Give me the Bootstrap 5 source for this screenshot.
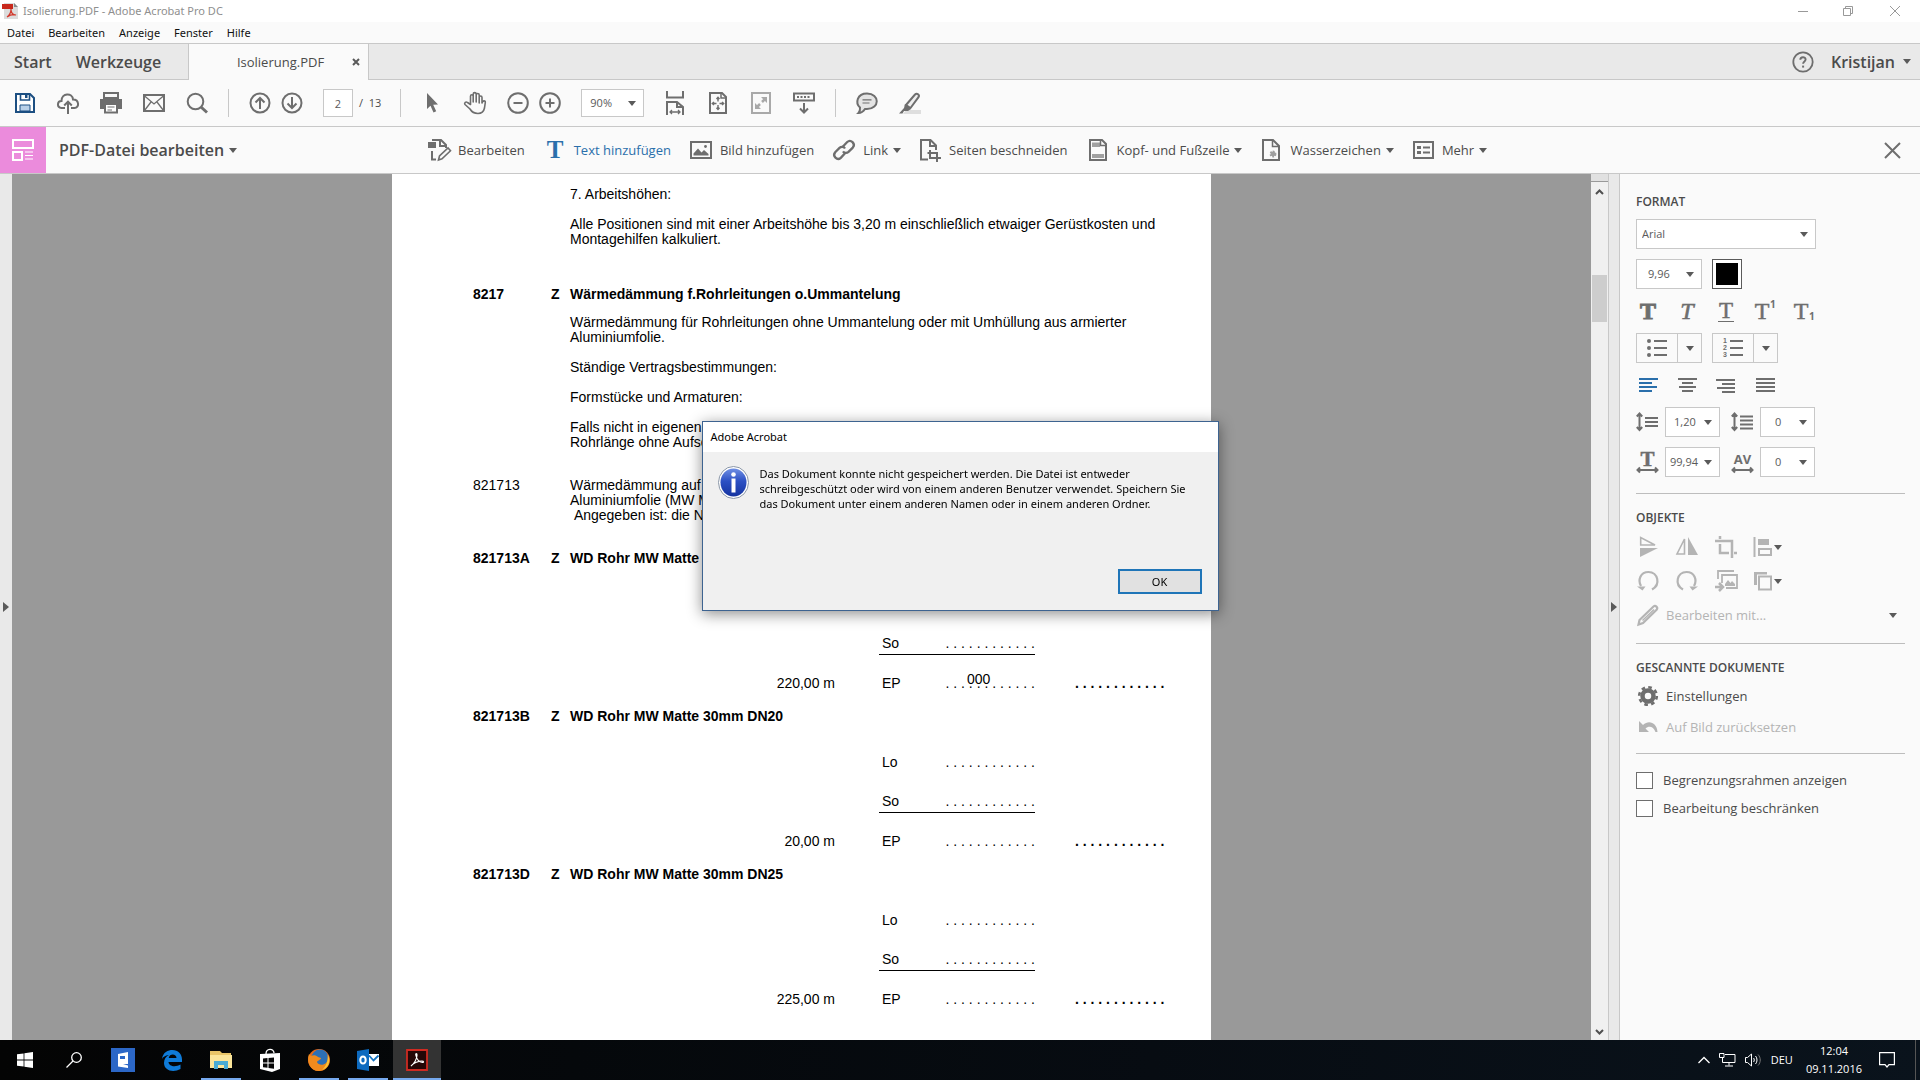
<!DOCTYPE html>
<html lang="de">
<head>
<meta charset="utf-8">
<meta name="viewport" content="width=device-width, initial-scale=1">
<title>Isolierung.PDF - Adobe Acrobat Pro DC</title>
<link href="https://cdn.jsdelivr.net/npm/bootstrap@5.3.0/dist/css/bootstrap.min.css" rel="stylesheet">
<style>
:root{--ink:#4b4b4b;--icon:#6e6e6e;--off:#b4b4b4;--line:#c8c8c8;--bar:#fafafa;--strip:#e9e9e9;--blue:#2a6fab}
body{font-family:"Open Sans","Noto Sans",sans-serif;font-size:13px;line-height:20px;color:var(--ink);background:var(--bar)}
button{background:none;border:0;padding:0;color:inherit;font:inherit;line-height:inherit}
a{color:inherit;text-decoration:none}
svg{display:block;flex:none;overflow:visible}
.app-window{height:100vh;overflow:hidden}
.title-bar{height:22px;background:#fff;color:#8f8f8f;font-family:"Noto Sans",sans-serif;font-size:11px;gap:5px;padding-left:2px;padding-right:11px}
.menu-bar{height:21px;color:#111;font-family:"Noto Sans",sans-serif;font-size:11px;gap:14px;padding-left:7px}
.tab-strip{height:37px;background:var(--strip);border-top:1px solid var(--line);border-bottom:1px solid var(--line)}
.tab-strip .big{font-size:16px;font-weight:600}
.tab-links{width:188px;gap:24px;padding-left:14px}
.doc-tab{width:181px;height:36px;background:var(--bar);border:1px solid var(--line);border-width:0 1px;margin-bottom:-1px;padding:0 8px 0 20px}
.user-area{gap:16px;padding-right:9px}
.tool-bar{height:47px;border-bottom:1px solid var(--line);gap:19px;padding-left:13px;font-size:11px}
.edit-bar{height:47px;border-bottom:1px solid var(--line)}
.ib{width:24px;height:24px;display:flex;align-items:center;justify-content:center;color:var(--icon);flex:none}
.sep{width:1px;height:28px;background:var(--line)}
.box{border:1px solid var(--line);border-radius:0;background-color:#fff;color:#5a5a5a;font-size:11px;line-height:20px;padding:0}
.page-no{width:30px;height:28px;text-align:center;margin-right:6px}
select.box{appearance:none;background-repeat:no-repeat;background-position:right 7px center;background-size:8px 5px;
 background-image:url("data:image/svg+xml,%3Csvg xmlns='http://www.w3.org/2000/svg' viewBox='0 0 8 5'%3E%3Cpath fill='%235a5a5a' d='M0 0h8L4 5z'/%3E%3C/svg%3E")}
.zoom-sel{width:63px;height:28px;padding-left:8px}
.caret{width:0;height:0;border:4px solid transparent;border-top:5px solid #5a5a5a;border-bottom:0;flex:none}
.mode-tile{width:46px;height:46px;background:#eb8bdc}
.mode-name{font-size:16px;font-weight:600;gap:5px;margin-left:13px;width:179px}
.edit-tools{margin-left:189px;gap:17px}
.edit-tools button{display:flex;align-items:center;gap:7px}
.edit-tools .plain{margin-right:1px}
.edit-tools .caret{margin-left:-2px}
.tone-blue{color:var(--blue)}
.tone-blue .ib{color:var(--blue)}
.work{min-height:0}
.side-strip{width:12px;background:var(--strip)}
.side-strip.r{border:1px solid var(--line);border-width:0 1px}
.canvas-area{background:#999;min-width:0;overflow:hidden}
.sheet{width:819px;background:#fff;color:#000;font-family:"Liberation Sans",Arial,sans-serif;font-size:14px;line-height:15px;padding:13px 0 0 81px}
.entry{display:grid;grid-template-columns:78px 19px 620px}
.entry p{margin:0 0 15px;grid-column:3}
.entry.chapter{margin:25px 0 13px}
.entry.article{margin:13px 0 28px}
.entry.article p{margin:0}
.head-row{margin-bottom:31px}
.price{display:flex;align-items:flex-start;margin-bottom:18px}
.price.wage{margin-bottom:24px}
.price.other{margin-bottom:21px}
.price .qty{width:362px;margin-right:44px;text-align:right}
.price .cell{width:156px;display:flex;justify-content:space-between;padding-left:3px;position:relative}
.price.other .cell{border-bottom:1px solid #000;height:19px}
.price .total{margin-left:40px;font-weight:700}
.note{position:absolute;left:88px;top:-4px}
.scroller{width:17px;background:#f0f0f0}
.scroller .splitter{width:100%;height:8px;background:#e1e1e1;border-bottom:1px solid #999}
.scroller .thumb{width:15px;height:47px;background:#cdcdcd;margin-top:77px}
.panel{width:300px;padding:20px 15px 0 16px}
.panel h2{font-size:12px;line-height:16px;font-weight:600;margin:0 0 9px}
.panel hr{margin:16px 0;border-top:1px solid #bdbdbd;opacity:1}
.stack{gap:10px}
.icons{gap:15px}
.panel .box{height:30px}
.box.w-font{width:180px;padding-left:5px}
.box.w-size{width:66px;padding-left:11px}
.box.w-num{width:55px;padding-left:8px;margin:0 11px 0 5px}
.box.w-num.wide{padding-left:4px}
.box.w-num.zero{padding-left:14px;margin-right:0}
.swatch{width:30px;height:30px;padding:3px;border:1px solid #5a5a5a;background:#fff}
.swatch span{display:block;width:22px;height:22px;background:#000}
.split{width:66px;border:1px solid var(--line);height:30px;background:var(--bar)}
.split button:first-child{width:41px;border-right:1px solid var(--line);height:100%}
.off{color:var(--off)}
.row-btn{display:flex;align-items:center;gap:6px;height:24px}
.scan-list{gap:7px;margin-top:-1px;margin-bottom:-2px}
.tick{width:17px;height:17px;border:1px solid #6e6e6e}
.tick.form-check-input[type=checkbox]{border-radius:0;margin:0}
.taskbar{height:40px;padding-left:1px;background:linear-gradient(90deg,#040404,#05080b 30%,#070c12 60%,#0a131c);color:#fff;font-size:11px;line-height:18px}
.task-list{gap:1px}
.task{width:48px;height:40px;display:flex;align-items:center;justify-content:center}
.task.open{background:linear-gradient(#76a9ee,#76a9ee) center bottom/40px 2px no-repeat}
.task.front{background:#333;box-shadow:inset 0 -2px #76a9ee}
.tray{gap:9px}
.tray time{margin:0 8px 0 4px}
.desk-edge{width:1px;height:40px;background:#555;margin:0 4px 0 11px}
.dialog-layer{position:fixed;inset:0 0 48px 0;pointer-events:none;display:flex;align-items:center;justify-content:center}
.msg{width:517px;height:190px;background:#f0f0f0;border:1px solid #3d6390;color:#000;box-shadow:0 3px 14px rgba(0,0,0,.45);font-family:"Noto Sans",sans-serif;font-size:11px;line-height:15px;pointer-events:auto}
.msg header{height:30px;background:#fff;padding:7px 8px}
.msg-body{padding:14px 15px 0;gap:11px}
.ok{width:84px;height:25px;background:#e1e1e1;border:2px solid #1f75b8}
</style>
<script src="https://cdn.jsdelivr.net/npm/bootstrap@5.3.0/dist/js/bootstrap.bundle.min.js"></script>
</head>
<body>
<div class="app-window d-flex flex-column">

<header class="title-bar d-flex align-items-center flex-shrink-0">
  <svg width="16" height="16" viewBox="0 0 16 16"><path d="M2 0h10l4 4v12H2z" fill="#dcdcdc"/><path d="M12 0l4 4h-4z" fill="#888"/><path d="M0 1h11v5H0z" fill="#c8281c"/><path d="M5 14c3-2 4-5 4-8 0 4 2 6 5 6-3-1-6 0-9 2z" fill="none" stroke="#d23a2e" stroke-width="1.2"/></svg>
  <span>Isolierung.PDF - Adobe Acrobat Pro DC</span>
  <div class="ms-auto d-flex align-items-center gap-4">
    <button aria-label="Minimieren"><svg width="21" height="20" viewBox="0 0 21 20" stroke="#999"><path d="M0 10.500h10"/></svg></button>
    <button aria-label="Wiederherstellen"><svg width="22" height="20" viewBox="0 0 22 20" fill="none" stroke="#999"><path d="M.5 7.500h7v7h-7zM2.500 7.500v-2h7v7h-2"/></svg></button>
    <button aria-label="Schließen"><svg width="20" height="20" viewBox="0 0 20 20" stroke="#999"><path d="M1 5l10 10M11 5L1 15"/></svg></button>
  </div>
</header>

<nav class="menu-bar d-flex align-items-center flex-shrink-0" aria-label="Menü">
  <a href="#">Datei</a><a href="#">Bearbeiten</a><a href="#">Anzeige</a><a href="#">Fenster</a><a href="#">Hilfe</a>
</nav>

<div class="tab-strip d-flex align-items-center flex-shrink-0">
  <div class="tab-links d-flex big"><button>Start</button><button>Werkzeuge</button></div>
  <div class="doc-tab d-flex align-items-center">
    <span class="flex-grow-1 text-center">Isolierung.PDF</span>
    <button aria-label="Tab schließen"><svg width="8" height="8" viewBox="0 0 8 8" stroke="#5a5a5a" stroke-width="2"><path d="M1 1l6 6M7 1L1 7"/></svg></button>
  </div>
  <div class="user-area ms-auto d-flex align-items-center">
    <button class="ib" aria-label="Hilfe"><svg width="24" height="24" viewBox="0 0 24 24" fill="none" stroke="#6e6e6e"><circle cx="12" cy="12" r="9.700" stroke-width="1.800"/><path d="M9.300 9.800c0-3.400 5.300-3.400 5.300-.3 0 1.900-2.500 2-2.500 4.300" stroke-width="1.900"/><path d="M12.100 15.600v2" stroke-width="2"/></svg></button>
    <button class="big d-flex align-items-center gap-2">Kristijan <span class="caret"></span></button>
  </div>
</div>

<div class="tool-bar d-flex align-items-center flex-shrink-0">
  <button class="ib" aria-label="Speichern"><svg width="24" height="24" viewBox="0 0 24 24"><path d="M3 3h14l4 4v14H3z" fill="#fff" stroke="#1c4f82" stroke-width="2"/><path d="M7.500 3v6h9V3" fill="none" stroke="#1c4f82" stroke-width="1.600"/><path d="M12 3.500h2.500V7H12z" fill="#1c4f82"/><path d="M7 14h10v6H7z" fill="#b9d0e8" stroke="#1c4f82"/></svg></button>
  <button class="ib" aria-label="Hochladen"><svg width="24" height="24" viewBox="0 0 24 24" fill="none" stroke="currentColor" stroke-width="2"><path d="M9 17H5.500C.5 16.500 1 10 5.500 10 5.500 1.500 16.500 1.500 17 8.500c6.500 0 6.500 8.500 1.500 8.500H15"/><path d="M12 23V11M8.200 14.500L12 10.700l3.800 3.800"/></svg></button>
  <button class="ib" aria-label="Drucken"><svg width="24" height="24" viewBox="0 0 24 24"><path d="M5 2h14v5H5z" fill="none" stroke="currentColor" stroke-width="2"/><path d="M1 8h22v10h-4v-5H5v5H1z" fill="currentColor"/><path d="M6 13h12v8.500H6z" fill="#fff" stroke="currentColor" stroke-width="2"/><path d="M8.500 16h7M8.500 19h4.500" stroke="currentColor"/></svg></button>
  <button class="ib" aria-label="E-Mail"><svg width="24" height="24" viewBox="0 0 24 24" fill="none" stroke="currentColor"><path d="M2 4h20v16H2z" stroke-width="2"/><path d="M2 4.500l10 8.500 10-8.500M2.500 19.500L9 11M21.500 19.500L15 11" stroke-width="1.300"/></svg></button>
  <button class="ib" aria-label="Suchen"><svg width="24" height="24" viewBox="0 0 24 24" fill="none" stroke="currentColor"><circle cx="10.500" cy="10.500" r="7.800" stroke-width="2"/><path d="M16 16l6 5.500" stroke-width="3"/></svg></button>
  <div class="sep"></div>
  <div class="d-flex gap-2">
    <button class="ib" aria-label="Vorherige Seite"><svg width="24" height="24" viewBox="0 0 24 24" fill="none" stroke="currentColor" stroke-width="2"><circle cx="12" cy="12" r="9.500"/><path d="M12 18V7.500M7.500 11.500L12 7l4.500 4.500"/></svg></button>
    <button class="ib" aria-label="Nächste Seite"><svg width="24" height="24" viewBox="0 0 24 24" fill="none" stroke="currentColor" stroke-width="2"><circle cx="12" cy="12" r="9.500"/><path d="M12 6v10.500M7.500 12.500L12 17l4.500-4.500"/></svg></button>
  </div>
  <label class="d-flex align-items-center"><input class="box page-no" type="text" value="2" aria-label="Seite"><span>/&nbsp; 13</span></label>
  <div class="sep"></div>
  <button class="ib" aria-label="Auswahl"><svg width="24" height="24" viewBox="0 0 24 24"><path d="M7 2l11 11.500-4.800.2 3 6.500-2.700 1.300-3-6.700L7 18z" fill="currentColor"/></svg></button>
  <button class="ib" aria-label="Hand"><svg width="24" height="24" viewBox="0 0 24 24" fill="none" stroke="currentColor" stroke-width="1.600" stroke-linecap="round" stroke-linejoin="round"><path d="M7.500 13.500V5.200c0-2 2.700-2 2.700 0V11 3.200c0-2.100 3-2.100 3 0V11 4c0-2 3-2 3 0v8V6.500c0-2 2.800-2 2.800 0V12c.5-2.500 3.500-3 3.300-.5l-.8 5.500c-.8 3.800-3 5.500-6.500 5.500-4 0-6-1-8-4.500L2 13.500c-1.200-2 1-3.200 2.500-2z"/></svg></button>
  <div class="d-flex gap-2">
    <button class="ib" aria-label="Verkleinern"><svg width="24" height="24" viewBox="0 0 24 24" fill="none" stroke="currentColor" stroke-width="2"><circle cx="12" cy="12" r="9.800"/><path d="M7.500 12h9"/></svg></button>
    <button class="ib" aria-label="Vergrößern"><svg width="24" height="24" viewBox="0 0 24 24" fill="none" stroke="currentColor" stroke-width="2"><circle cx="12" cy="12" r="9.800"/><path d="M7.500 12h9M12 7.500v9"/></svg></button>
  </div>
  <select class="box zoom-sel" aria-label="Zoom"><option>90%</option></select>
  <button class="ib" aria-label="Seitenbreite"><svg width="24" height="26" viewBox="0 0 24 26" fill="none" stroke="currentColor" stroke-width="2"><path d="M4 1v6.500h16V1M4 25V12h10l6 5v8M14 12v5h6"/><path d="M7 22h10M9 20l-2 2 2 2M15 20l2 2-2 2" stroke-width="1.300"/></svg></button>
  <button class="ib" aria-label="Ganze Seite"><svg width="24" height="24" viewBox="0 0 24 24" fill="none" stroke="currentColor"><path d="M4 2h12l4 4v16H4z" stroke-width="2"/><path d="M15 2v5h5" stroke-width="1.500"/><path d="M12 6.500v4M12 14v4M6.500 12.500h4M13.500 12.500h4M10.500 8L12 6.300 13.500 8M10.500 16.800l1.500 1.700 1.500-1.700M8 11l-1.700 1.500L8 14M16 11l1.700 1.500L16 14" stroke-width="1.400"/></svg></button>
  <button class="ib" aria-label="Vollbild"><svg width="24" height="24" viewBox="0 0 24 24" fill="none" stroke="#a9a9a9"><path d="M3 2h18v20H3z" stroke-width="2"/><path d="M12 6h6v6zM6 12v6h6z" fill="#a9a9a9" stroke="none"/><path d="M17 7l-4 4M7 17l4-4" stroke-width="2.500"/></svg></button>
  <button class="ib" aria-label="Bildlauf"><svg width="24" height="24" viewBox="0 0 24 24" fill="none" stroke="currentColor"><path d="M2 2.500h20v7H2z" stroke-width="2"/><path d="M5 6h14" stroke-width="2" stroke-dasharray="2 1.500"/><path d="M12 12v9M8 17.500l4 4 4-4" stroke-width="2"/></svg></button>
  <div class="sep"></div>
  <button class="ib" aria-label="Kommentar"><svg width="24" height="24" viewBox="0 0 24 24" fill="#e4e4e4" stroke="currentColor" stroke-width="2"><path d="M12 2.500c13 0 13 15.500 0 15.500h-2c-2 3-4 4-6.500 4 1.500-1.500 1.800-3 1.500-5.500C0 12 2 2.500 12 2.500z"/><path d="M7.500 8.800h9M7.500 12h7" stroke-width="1.200"/></svg></button>
  <button class="ib" aria-label="Hervorheben"><svg width="24" height="24" viewBox="0 0 24 24"><path d="M8 19h15v4H5z" fill="#dedede"/><path d="M8 14L17 3.500c2-2 5 .5 3.500 2.700L12.500 17z" fill="#eee" stroke="currentColor" stroke-width="2"/><path d="M7 13l6 5-3 2H6l-1.500 2.500H1L6 17z" fill="currentColor"/></svg></button>
</div>

<div class="edit-bar d-flex align-items-center flex-shrink-0">
  <div class="mode-tile d-flex align-items-center justify-content-center"><svg width="24" height="24" viewBox="0 0 24 24" fill="none" stroke="#fff" stroke-width="2"><path d="M2 2h20v8H2zM2 14h9v8H2z"/><path d="M14 14h8M14 17.500h8M14 21h8" stroke-width="1.200"/></svg></div>
  <button class="mode-name d-flex align-items-center">PDF-Datei bearbeiten<span class="caret"></span></button>
  <div class="edit-tools d-flex align-items-center">
    <button class="plain"><span class="ib"><svg width="24" height="24" viewBox="0 0 24 24" fill="none" stroke="currentColor"><path d="M1 4h8v6H1z" fill="currentColor" stroke="none"/><path d="M5 2h9l5 5v3M5 13v8.500h4" stroke-width="2"/><path d="M13 2v6h6" stroke-width="2"/><path d="M11.500 22l1-4 8.500-8 2.500 2.800-8.500 8z" stroke-width="1.600"/></svg></span>Bearbeiten</button>
    <button class="plain tone-blue"><span class="ib"><svg width="24" height="24" viewBox="0 0 24 24"><text x="12" y="20" text-anchor="middle" font-family="Liberation Serif,serif" font-size="25" font-weight="700" fill="currentColor">T</text></svg></span>Text hinzufügen</button>
    <button class="plain"><span class="ib"><svg width="24" height="24" viewBox="0 0 24 24"><path d="M2 4h20v16H2z" fill="none" stroke="currentColor" stroke-width="2"/><path d="M4.500 17.500v-2l4.500-5 3.500 4 2.500-2.500 4.500 4v1.500z" fill="currentColor"/><circle cx="16.500" cy="8.500" r="1.400" fill="currentColor"/></svg></span>Bild hinzufügen</button>
    <button><span class="ib"><svg width="24" height="24" viewBox="0 0 24 24" fill="none" stroke="currentColor" stroke-width="2.300"><path d="M10.500 9l4.700-5c3.600-3.200 8.800 1.800 5.600 5.600l-4.300 4.300c-1.600 1.400-4.300 1.300-5.500-.6"/><path d="M13.500 14.800l-4.700 5c-3.600 3.200-8.800-1.800-5.600-5.600l4.300-4.300c1.600-1.400 4.300-1.300 5.500.6"/></svg></span>Link<span class="caret"></span></button>
    <button class="plain"><span class="ib"><svg width="24" height="24" viewBox="0 0 24 24" fill="none" stroke="currentColor" stroke-width="2"><path d="M10 21.500H3V2h9.500L18 7.500V12"/><path d="M12 2v6h6M12 12v8h11M9.500 15H19v9"/></svg></span>Seiten beschneiden</button>
    <button><span class="ib"><svg width="24" height="24" viewBox="0 0 24 24" fill="none" stroke="currentColor" stroke-width="2"><path d="M4 2h12l4 4v16H4z"/><path d="M6 4.500h8V9H6zM6 16h12v4H6z" fill="#a0a0a0" stroke="none"/><path d="M14.500 2v5.500H20" stroke-width="1.500"/></svg></span>Kopf- und Fußzeile<span class="caret"></span></button>
    <button><span class="ib"><svg width="24" height="24" viewBox="0 0 24 24" fill="none" stroke="currentColor" stroke-width="2"><path d="M4 2h10l6 6v14H4z"/><path d="M13.500 2v6.500H20" stroke-width="1.500"/><circle cx="14" cy="16" r="2.400" fill="#a0a0a0" stroke="#a0a0a0" stroke-dasharray="1.500 1"/></svg></span>Wasserzeichen<span class="caret"></span></button>
    <button><span class="ib"><svg width="24" height="24" viewBox="0 0 24 24" fill="none" stroke="currentColor" stroke-width="2"><path d="M3 4h19v16H3z"/><path d="M6 8h4v3H6zM6 13h4v3H6z" fill="currentColor" stroke="none"/><path d="M12 9.500h7M12 14.500h7"/></svg></span>Mehr<span class="caret"></span></button>
  </div>
  <button class="ib ms-auto me-3" aria-label="Werkzeug schließen"><svg width="24" height="24" viewBox="0 0 24 24" stroke="#6e6e6e" stroke-width="2"><path d="M5 5l15 15M20 5L5 20"/></svg></button>
</div>

<main class="work d-flex flex-grow-1">
  <div class="side-strip d-flex align-items-center justify-content-center flex-shrink-0"><svg width="6" height="10" viewBox="0 0 6 10"><path d="M0 0l6 5-6 5z" fill="#5a5a5a"/></svg></div>
  <div class="canvas-area flex-grow-1 d-flex justify-content-center">
    <article class="sheet flex-shrink-0">
      <div class="entry">
        <p>7. Arbeitshöhen:</p>
        <p>Alle Positionen sind mit einer Arbeitshöhe bis 3,20 m einschließlich etwaiger Gerüstkosten und<br>Montagehilfen kalkuliert.</p>
      </div>
      <div class="entry chapter fw-bold"><span>8217</span><span>Z</span><span>Wärmedämmung f.Rohrleitungen o.Ummantelung</span></div>
      <div class="entry">
        <p>Wärmedämmung für Rohrleitungen ohne Ummantelung oder mit Umhüllung aus armierter<br>Aluminiumfolie.</p>
        <p>Ständige Vertragsbestimmungen:</p>
        <p>Formstücke und Armaturen:</p>
        <p>Falls nicht in eigenen<br>Rohrlänge ohne Aufschlag</p>
      </div>
      <div class="entry article"><span>821713</span><p>Wärmedämmung auf<br>Aluminiumfolie (MW Matte)<br>&nbsp;Angegeben ist: die Nennweite</p></div>

      <section>
        <div class="entry head-row fw-bold"><span>821713A</span><span>Z</span><span>WD Rohr MW Matte 30mm DN15</span></div>
        <div class="price wage"><span class="qty"></span><span class="cell"><span>Lo</span><span>. . . . . . . . . . . .</span></span></div>
        <div class="price other"><span class="qty"></span><span class="cell"><span>So</span><span>. . . . . . . . . . . .</span></span></div>
        <div class="price"><span class="qty">220,00 m</span><span class="cell"><span>EP</span><span>. . . . . . . . . . . .</span><span class="note">000</span></span><span class="total">. . . . . . . . . . . .</span></div>
      </section>
      <section>
        <div class="entry head-row fw-bold"><span>821713B</span><span>Z</span><span>WD Rohr MW Matte 30mm DN20</span></div>
        <div class="price wage"><span class="qty"></span><span class="cell"><span>Lo</span><span>. . . . . . . . . . . .</span></span></div>
        <div class="price other"><span class="qty"></span><span class="cell"><span>So</span><span>. . . . . . . . . . . .</span></span></div>
        <div class="price"><span class="qty">20,00 m</span><span class="cell"><span>EP</span><span>. . . . . . . . . . . .</span></span><span class="total">. . . . . . . . . . . .</span></div>
      </section>
      <section>
        <div class="entry head-row fw-bold"><span>821713D</span><span>Z</span><span>WD Rohr MW Matte 30mm DN25</span></div>
        <div class="price wage"><span class="qty"></span><span class="cell"><span>Lo</span><span>. . . . . . . . . . . .</span></span></div>
        <div class="price other"><span class="qty"></span><span class="cell"><span>So</span><span>. . . . . . . . . . . .</span></span></div>
        <div class="price"><span class="qty">225,00 m</span><span class="cell"><span>EP</span><span>. . . . . . . . . . . .</span></span><span class="total">. . . . . . . . . . . .</span></div>
      </section>
    </article>
  </div>
  <div class="scroller d-flex flex-column align-items-center flex-shrink-0">
    <div class="splitter"></div>
    <svg class="mt-1" width="9" height="12" viewBox="0 0 9 12" fill="none" stroke="#505050" stroke-width="2"><path d="M1 8l3.500-3.500L8 8"/></svg>
    <div class="thumb"></div>
    <svg class="mt-auto mb-1" width="9" height="8" viewBox="0 0 9 8" fill="none" stroke="#505050" stroke-width="2"><path d="M1 2l3.500 3.500L8 2"/></svg>
  </div>
  <div class="side-strip r d-flex align-items-center justify-content-center flex-shrink-0"><svg width="6" height="10" viewBox="0 0 6 10"><path d="M0 0l6 5-6 5z" fill="#5a5a5a"/></svg></div>

  <aside class="panel flex-shrink-0">
    <h2>FORMAT</h2>
    <div class="stack d-flex flex-column">
      <select class="box w-font" aria-label="Schriftart"><option>Arial</option></select>
      <div class="d-flex stack"><select class="box w-size" aria-label="Schriftgröße"><option>9,96</option></select><button class="swatch" aria-label="Schriftfarbe"><span></span></button></div>
      <div class="d-flex icons">
        <button class="ib" aria-label="Fett"><svg width="24" height="24" viewBox="0 0 24 24"><text x="12" y="20" text-anchor="middle" font-family="Liberation Serif,serif" font-size="24" font-weight="700" fill="#6e6e6e" stroke="#6e6e6e">T</text></svg></button>
        <button class="ib" aria-label="Kursiv"><svg width="24" height="24" viewBox="0 0 24 24"><text x="12" y="20" text-anchor="middle" font-family="Liberation Serif,serif" font-size="24" font-style="italic" fill="#6e6e6e" stroke="#6e6e6e" stroke-width=".6">T</text></svg></button>
        <button class="ib" aria-label="Unterstrichen"><svg width="24" height="24" viewBox="0 0 24 24"><text x="12" y="19" text-anchor="middle" font-family="Liberation Serif,serif" font-size="23" fill="#6e6e6e" stroke="#6e6e6e" stroke-width=".5">T</text><path d="M4 22.500h16" stroke="#6e6e6e"/></svg></button>
        <button class="ib" aria-label="Hochgestellt"><svg width="24" height="24" viewBox="0 0 24 24" fill="#6e6e6e"><text x="9" y="20" text-anchor="middle" font-family="Liberation Serif,serif" font-size="24" stroke="#6e6e6e" stroke-width=".5">T</text><text x="17" y="9" font-family="Open Sans,sans-serif" font-size="10" font-weight="700">1</text></svg></button>
        <button class="ib" aria-label="Tiefgestellt"><svg width="24" height="24" viewBox="0 0 24 24" fill="#6e6e6e"><text x="9" y="20" text-anchor="middle" font-family="Liberation Serif,serif" font-size="24" stroke="#6e6e6e" stroke-width=".5">T</text><text x="17" y="21" font-family="Open Sans,sans-serif" font-size="10" font-weight="700">1</text></svg></button>
      </div>
      <div class="d-flex stack">
        <div class="split d-flex"><button class="d-flex align-items-center justify-content-center" aria-label="Aufzählung"><svg width="22" height="20" viewBox="0 0 22 20" fill="#6e6e6e" stroke="#6e6e6e" stroke-width="2"><path d="M8 3h13M8 10h13M8 17h13"/><circle cx="3" cy="3" r="1"/><circle cx="3" cy="10" r="1"/><circle cx="3" cy="17" r="1"/></svg></button><button class="flex-grow-1 d-flex align-items-center justify-content-center" aria-label="Aufzählungsart"><span class="caret"></span></button></div>
        <div class="split d-flex"><button class="d-flex align-items-center justify-content-center" aria-label="Nummerierung"><svg width="22" height="20" viewBox="0 0 22 20" fill="#6e6e6e"><path d="M8 3h13M8 10h13M8 17h13" stroke="#6e6e6e" stroke-width="2"/><g font-family="Liberation Sans,sans-serif" font-size="7" font-weight="700"><text x="1" y="5">1</text><text x="1" y="12">2</text><text x="1" y="19">3</text></g></svg></button><button class="flex-grow-1 d-flex align-items-center justify-content-center" aria-label="Nummerierungsart"><span class="caret"></span></button></div>
      </div>
      <div class="d-flex icons">
        <button class="ib tone-blue" aria-label="Linksbündig"><svg width="24" height="24" viewBox="0 0 24 24" stroke="#2a6fab" stroke-width="2"><path d="M3 6h19M3 10h13M3 14h18M3 18h13"/></svg></button>
        <button class="ib" aria-label="Zentriert"><svg width="24" height="24" viewBox="0 0 24 24" stroke="currentColor" stroke-width="2"><path d="M3 6h19M7 10h11M4 14h17M7 18h11"/></svg></button>
        <button class="ib" aria-label="Rechtsbündig"><svg width="24" height="24" viewBox="0 0 24 24" stroke="currentColor" stroke-width="2"><path d="M2 7h19M8 11h13M3 15h18M8 19h13"/></svg></button>
        <button class="ib" aria-label="Blocksatz"><svg width="24" height="24" viewBox="0 0 24 24" stroke="currentColor" stroke-width="2"><path d="M3 6h19M3 10h19M3 14h19M3 18h19"/></svg></button>
      </div>
      <div class="d-flex align-items-center">
        <svg width="24" height="24" viewBox="0 0 24 24" stroke="#6e6e6e" stroke-width="2" fill="none"><path d="M3.500 4v15M.8 6.500l2.700-3 2.700 3M.8 17l2.700 3 2.700-3M9 8h13M9 12h13M9 16h13"/></svg>
        <select class="box w-num" aria-label="Zeilenabstand"><option>1,20</option></select>
        <svg width="24" height="24" viewBox="0 0 24 24" stroke="#6e6e6e" stroke-width="2" fill="none"><path d="M3.500 4v15M.8 6.500l2.700-3 2.700 3M.8 17l2.700 3 2.700-3M9 6.500h13M9 10.500h13M9 14.500h13M9 18.500h13"/></svg>
        <select class="box w-num zero" aria-label="Absatzabstand"><option>0</option></select>
      </div>
      <div class="d-flex align-items-center">
        <svg width="24" height="26" viewBox="0 0 24 26" fill="none" stroke="#6e6e6e" stroke-width="2"><text x="11.500" y="17" text-anchor="middle" font-family="Liberation Serif,serif" font-size="21" font-weight="700" fill="#6e6e6e" stroke-width=".5">T</text><path d="M1 21h21M4 18.500L1.500 21 4 23.500M19 18.500l2.500 2.500-2.500 2.500"/></svg>
        <select class="box w-num wide" aria-label="Horizontale Skalierung"><option>99,94</option></select>
        <svg width="24" height="26" viewBox="0 0 24 26" fill="none" stroke="#6e6e6e" stroke-width="2"><text x="11.500" y="15" text-anchor="middle" font-family="Open Sans,sans-serif" font-size="13" font-weight="700" fill="#6e6e6e" stroke="none">AV</text><path d="M1 21h21M4 18.500L1.500 21 4 23.500M19 18.500l2.500 2.500-2.500 2.500"/></svg>
        <select class="box w-num zero" aria-label="Zeichenabstand"><option>0</option></select>
      </div>
    </div>
    <hr>
    <h2>OBJEKTE</h2>
    <div class="stack d-flex flex-column off">
      <div class="d-flex icons">
        <button class="ib off" aria-label="Vertikal spiegeln"><svg width="24" height="24" viewBox="0 0 24 24"><path d="M4 13h18L4 22z" fill="currentColor"/><path d="M4.700 2.500V10H19z" fill="none" stroke="currentColor" stroke-width="1.600"/></svg></button>
        <button class="ib off" aria-label="Horizontal spiegeln"><svg width="24" height="24" viewBox="0 0 24 24"><path d="M13 2v18h10z" fill="currentColor"/><path d="M9.500 4v15H2z" fill="none" stroke="currentColor" stroke-width="1.600"/></svg></button>
        <button class="ib off" aria-label="Zuschneiden"><svg width="24" height="24" viewBox="0 0 24 24" fill="none" stroke="currentColor" stroke-width="2.500"><path d="M1 6h17v17M6 9v9h9M6 1v3M20 18h3"/></svg></button>
        <button class="d-flex align-items-center" aria-label="Ausrichten"><svg width="21" height="24" viewBox="0 0 21 24" fill="none" stroke="#b4b4b4" stroke-width="2"><path d="M1.500 2v20M6 14h12v6H6z"/><path d="M5 4h11v6H5z" fill="#b4b4b4" stroke="none"/></svg><span class="caret"></span></button>
      </div>
      <div class="d-flex icons">
        <button class="ib off" aria-label="Nach links drehen"><svg width="24" height="24" viewBox="0 0 24 24" fill="none" stroke="currentColor" stroke-width="2.200"><path d="M16 20.500c9-5 6-17.500-3.500-17.500C4.500 3 1.500 11 5 17"/><path d="M1 17.500h8.500l-3 4z" fill="currentColor" stroke="none"/></svg></button>
        <button class="ib off" aria-label="Nach rechts drehen"><svg width="24" height="24" viewBox="0 0 24 24" fill="none" stroke="currentColor" stroke-width="2.200"><path d="M8 20.500C-1 15.500 2 3 11.500 3c8 0 11 8 7.500 14"/><path d="M23 17.500h-8.500l3 4z" fill="currentColor" stroke="none"/></svg></button>
        <button class="ib off" aria-label="Bild ersetzen"><svg width="24" height="24" viewBox="0 0 24 24" fill="none" stroke="currentColor" stroke-width="1.800"><path d="M4 10V2h16M8 14V6h15v13H12"/><path d="M11 17v-2l3-4 2.500 3 1.500-2 3 3v2z" fill="currentColor" stroke="none"/><path d="M1 18h7M5 14L9 18l-4 4" stroke-width="2.500"/></svg></button>
        <button class="d-flex align-items-center" aria-label="Anordnen"><svg width="21" height="24" viewBox="0 0 21 24" fill="none" stroke="#b4b4b4" stroke-width="2"><path d="M6 7.500h12v13H6z"/><path d="M1 3h13v2.500H4V16H1z" fill="#b4b4b4" stroke="none"/></svg><span class="caret"></span></button>
      </div>
      <button class="row-btn w-100 pe-2"><span class="ib off"><svg width="24" height="24" viewBox="0 0 24 24" fill="none" stroke="currentColor"><path d="M2.500 21.500l1-4.500L17.500 3.500c2-1.600 4.700.8 3.300 3L7 20z" stroke-width="2.200"/><path d="M6.500 17.500L18 6.500" stroke-width="1.500"/></svg></span>Bearbeiten mit...<span class="caret ms-auto"></span></button>
    </div>
    <hr>
    <h2>GESCANNTE DOKUMENTE</h2>
    <div class="scan-list d-flex flex-column">
      <button class="row-btn"><span class="ib"><svg width="24" height="24" viewBox="0 0 24 24" fill="none" stroke="currentColor"><circle cx="12" cy="12" r="5.500" stroke-width="4.500"/><circle cx="12" cy="12" r="8.800" stroke-width="2.600" stroke-dasharray="3.600 3.310"/></svg></span>Einstellungen</button>
      <button class="row-btn off"><span class="ib off"><svg width="24" height="24" viewBox="0 0 24 24"><path d="M3 6v11h10l-3.500-3.500c3-3 8-2.500 10 3.500h2C21 8 13 4.500 7 10z" fill="currentColor"/></svg></span>Auf Bild zurücksetzen</button>
    </div>
    <hr>
    <div class="d-flex flex-column gap-2">
      <div class="d-flex align-items-center stack"><input class="form-check-input tick" type="checkbox" id="frame"><label for="frame">Begrenzungsrahmen anzeigen</label></div>
      <div class="d-flex align-items-center stack"><input class="form-check-input tick" type="checkbox" id="limit"><label for="limit">Bearbeitung beschränken</label></div>
    </div>
  </aside>
</main>

<footer class="taskbar d-flex align-items-center flex-shrink-0">
  <div class="task-list d-flex">
    <button class="task" aria-label="Start"><svg width="16" height="16" viewBox="0 0 16 16" fill="#fff"><path d="M0 2.300L6.600 1.400v6.200H0zM7.400 1.300L16 0v7.600H7.400zM0 8.400h6.600v6.200L0 13.700zM7.400 8.400H16V16l-8.600-1.300z"/></svg></button>
    <button class="task" aria-label="Suchen"><svg width="16" height="16" viewBox="0 0 16 16" fill="none" stroke="#fff" stroke-width="1.300"><circle cx="10.500" cy="5.500" r="4.800"/><path d="M7 9L.5 15.500"/></svg></button>
    <button class="task" aria-label="App"><svg width="24" height="24" viewBox="0 0 24 24"><path d="M0 0h24v24H0z" fill="#2c67c7"/><path d="M7 6l10-2v16L7 18.500z" fill="#fff"/><path d="M9 8h5v3H9zM12 16h5v1.500z" fill="#2c67c7"/></svg></button>
    <button class="task" aria-label="Edge"><svg width="22" height="22" viewBox="0 0 22 22"><path d="M1 10C2 3 7 1 11.500 1 17 1 21 5 21 10.500V13H7.500c.3 4.500 7 5.500 12 2.500v4.500C12 24 3 21.500 3 14c0-4 2-6.500 5-8-4 .5-6 2-7 4zm6.700-1h7.800c0-4.500-7-4.800-7.800 0z" fill="#0f7bd8"/></svg></button>
    <button class="task open" aria-label="Explorer"><svg width="22" height="20" viewBox="0 0 22 20"><path d="M0 1h10l2 2h9v15H0z" fill="#e9c568"/><path d="M0 5h22v13H0z" fill="#fbe59a"/><path d="M4 19v-8h14v8h-4v-4H8v4z" fill="#49abd4"/></svg></button>
    <button class="task" aria-label="Store"><svg width="22" height="24" viewBox="0 0 22 24"><path d="M1 6l20-1v16L13 24 1 21z" fill="#fff"/><path d="M7 6c0-6 8-6 8-1" fill="none" stroke="#fff" stroke-width="1.300"/><path d="M4 10.500l4.500-.4v4.400H4zM9.500 10l5.500-.5v5H9.500zM4 15.500h4.500v4.300L4 19.200zM9.500 15.500H15v5.200l-5.500-.7z" fill="#080808"/></svg></button>
    <button class="task open" aria-label="Firefox"><svg width="22" height="22" viewBox="0 0 22 22"><circle cx="11" cy="11" r="11" fill="#e66a1a"/><circle cx="12" cy="9" r="8.500" fill="#2d6fb5"/><path d="M1 5l2 2c2-1 5-1 7 1l3 1c0 2-3 2-4 4 1 3 6 4 9 1 2-2 2-6 1-9 5 6 2 16-7 17C3 23-2 13 1 5z" fill="#f08a1d"/><path d="M20 6c3 7 0 13-6 15 4-4 6-8 6-15z" fill="#fbc736"/></svg></button>
    <button class="task open" aria-label="Outlook"><svg width="24" height="22" viewBox="0 0 24 22"><path d="M12 5h11v12H12z" fill="#fff"/><path d="M13 6.500l4.500 5 5-5" fill="none" stroke="#1674c1" stroke-width="1.800"/><path d="M1 2l12-2v22L1 20z" fill="#0d6abf"/><ellipse cx="7" cy="11" rx="2.700" ry="3.600" fill="none" stroke="#fff" stroke-width="2"/></svg></button>
    <button class="task front" aria-label="Acrobat"><svg width="22" height="22" viewBox="0 0 22 22"><path d="M1 1h20v20H1z" fill="#240707" stroke="#cf2b22" stroke-width="1.800"/><path d="M5 17c3-2 6-7 6-11 0-2-1.500-2-1.200 0 .8 4 3.500 7 6.700 7.500 1.500 0 1.500-1.300-.5-1.300-4 0-9 2-11 4.800z" fill="none" stroke="#fff" stroke-width="1.200"/></svg></button>
  </div>
  <div class="tray ms-auto d-flex align-items-center">
    <svg width="12" height="8" viewBox="0 0 12 8" fill="none" stroke="#fff" stroke-width="1.300"><path d="M.5 7L6 1.500 11.500 7"/></svg>
    <svg width="17" height="14" viewBox="0 0 17 14" fill="none" stroke="#fff"><path d="M6 1.500h10v8H3.500V5M10 9.500v3M6 13h8"/><path d="M.5.500h4.500v4H.5z"/></svg>
    <svg width="17" height="14" viewBox="0 0 17 14" fill="none" stroke="#fff"><path d="M.5 4.500h2l4-3.500v12l-4-3.500h-2z"/><path d="M8.500 5c1 1 1 3 0 4M10.500 3c2 2 2 6 0 8"/><path d="M13 1.500c3 3 3 8 0 11" stroke="#777"/></svg>
    <span>DEU</span>
    <time class="text-center">12:04<br>09.11.2016</time>
    <svg width="16" height="17" viewBox="0 0 16 17" fill="none" stroke="#fff" stroke-width="1.200"><path d="M.6.6h14.800v12H10L8 15l-2-2.400H.6z"/></svg>
    <div class="desk-edge"></div>
  </div>
</footer>
</div>

<div class="dialog-layer">
  <div class="msg d-flex flex-column" role="dialog" aria-label="Adobe Acrobat">
    <header>Adobe Acrobat</header>
    <div class="msg-body d-flex">
      <svg width="31" height="33" viewBox="0 0 31 33"><defs><linearGradient id="ball" x1="0" y1="0" x2="0" y2="1"><stop offset="0" stop-color="#6f8fe4"/><stop offset=".45" stop-color="#2c50c4"/><stop offset="1" stop-color="#1433a0"/></linearGradient></defs><ellipse cx="15.500" cy="16.500" rx="15" ry="16" fill="#fff" stroke="#8b97a8"/><ellipse cx="15.500" cy="16.500" rx="13" ry="14" fill="url(#ball)"/><circle cx="15.500" cy="8.500" r="2.300" fill="#fff"/><path d="M13.500 12.500h4v14h-4z" fill="#fff"/></svg>
      <div>Das Dokument konnte nicht gespeichert werden. Die Datei ist entweder<br>schreibgeschützt oder wird von einem anderen Benutzer verwendet. Speichern Sie<br>das Dokument unter einem anderen Namen oder in einem anderen Ordner.</div>
    </div>
    <div class="mt-auto d-flex justify-content-end pe-3 pb-3"><button class="ok">OK</button></div>
  </div>
</div>
</body>
</html>
